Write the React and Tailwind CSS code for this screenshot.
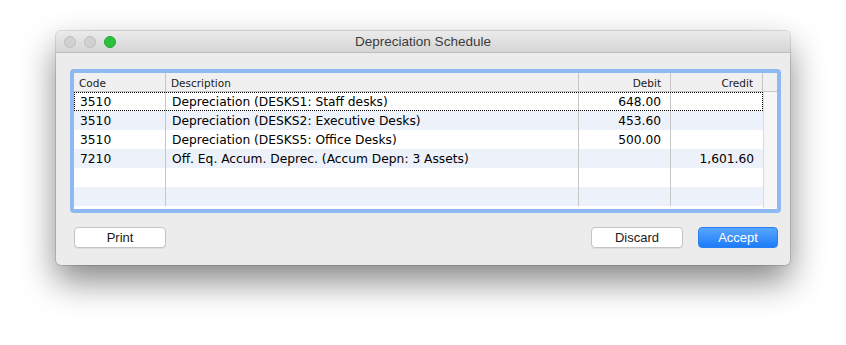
import React from "react";

const rows = [
  { code: "3510", desc: "Depreciation (DESKS1: Staff desks)", debit: "648.00", credit: "" },
  { code: "3510", desc: "Depreciation (DESKS2: Executive Desks)", debit: "453.60", credit: "" },
  { code: "3510", desc: "Depreciation (DESKS5: Office Desks)", debit: "500.00", credit: "" },
  { code: "7210", desc: "Off. Eq. Accum. Deprec. (Accum Depn: 3 Assets)", debit: "", credit: "1,601.60" },
  { code: "", desc: "", debit: "", credit: "" },
  { code: "", desc: "", debit: "", credit: "" },
];

const lucida = { fontFamily: '"DejaVu Sans", "Lucida Grande", sans-serif' };
const helv = { fontFamily: '"Liberation Sans", Arial, sans-serif' };

export default function App() {
  return (
    <div className="w-[846px] h-[345px] bg-white pl-[56px] pt-[31px]">
      <div className="w-[734px] h-[234px] rounded-[5px] bg-[#ececec] shadow-[0_0_0_1px_rgba(0,0,0,0.12),0_16px_34px_rgba(0,0,0,0.48)] overflow-hidden flex flex-col">
        {/* title bar */}
        <div className="relative h-[22px] shrink-0 bg-gradient-to-b from-[#ebebeb] to-[#d5d5d5] border-b border-[#bdbdbd] flex items-center">
          <div className="absolute left-[8px] top-[5px] flex gap-[8px]">
            <div className="w-[12px] h-[12px] rounded-full bg-[#d1d1d1] border border-[#bfbfbf]" />
            <div className="w-[12px] h-[12px] rounded-full bg-[#d1d1d1] border border-[#bfbfbf]" />
            <div className="w-[12px] h-[12px] rounded-full bg-[#2dc13f] border border-[#1fa82e]" />
          </div>
          <div className="w-full text-center text-[13.5px] text-[#3c3c3c] leading-[21px]" style={helv}>
            Depreciation Schedule
          </div>
        </div>

        {/* table frame */}
        <div className="ml-[14px] mt-[16px] w-[711px] h-[144px] rounded-[4px] bg-[#8fb9f1] p-[4px]">
          <div className="w-full h-full bg-white flex flex-col overflow-hidden" style={lucida}>
            {/* header */}
            <div className="flex h-[19px] shrink-0 bg-[#f0f0f0] border-b border-[#c6c6c6] text-[10.5px] text-[#1a1a1a] leading-[20px]">
              <div className="w-[92px] border-r border-[#c6c6c6] pl-[5px]">Code</div>
              <div className="w-[413px] border-r border-[#c6c6c6] pl-[5px]">Description</div>
              <div className="w-[92px] border-r border-[#c6c6c6] pr-[9px] text-right">Debit</div>
              <div className="w-[92px] border-r border-[#c6c6c6] pr-[9px] text-right">Credit</div>
              <div className="flex-1" />
            </div>
            {/* body */}
            <div className="flex flex-1">
              <div className="w-[689px] flex flex-col">
                {rows.map((r, i) => (
                  <div
                    key={i}
                    className={
                      "relative flex h-[19px] text-[12.25px] text-black leading-[20px] " +
                      (i % 2 === 1 ? "bg-[#edf1f9]" : "bg-white")
                    }
                  >
                    <div className="w-[92px] border-r border-[#c6c6c6] pl-[6px]">{r.code}</div>
                    <div className="w-[413px] border-r border-[#c6c6c6] pl-[6px] whitespace-nowrap">{r.desc}</div>
                    <div className="w-[92px] border-r border-[#c6c6c6] pr-[9px] text-right">{r.debit}</div>
                    <div className="w-[92px] pr-[9px] text-right">{r.credit}</div>
                    {i === 0 && (
                      <div className="absolute inset-0 border border-dotted border-black pointer-events-none" />
                    )}
                  </div>
                ))}
              </div>
              <div className="flex-1 h-[116px] bg-[#f6f6f6] border-l border-[#dcdcdc]" />
            </div>
          </div>
        </div>

        {/* buttons */}
        <div className="flex mt-[14px] ml-[18px] mr-[12px] text-[13px]" style={helv}>
          <button className="w-[92px] h-[21px] rounded-[4px] bg-white border border-[#c4c4c4] shadow-[0_1px_0_rgba(0,0,0,0.06)] text-[#1a1a1a] leading-[19px]">
            Print
          </button>
          <div className="flex-1" />
          <button className="w-[92px] h-[21px] rounded-[4px] bg-white border border-[#c4c4c4] shadow-[0_1px_0_rgba(0,0,0,0.06)] text-[#1a1a1a] leading-[19px]">
            Discard
          </button>
          <button className="ml-[15px] w-[80px] h-[21px] rounded-[4px] bg-gradient-to-b from-[#56a6fe] to-[#1a7cf7] border border-[#2a7ff0] text-white leading-[19px]">
            Accept
          </button>
        </div>
      </div>
    </div>
  );
}
